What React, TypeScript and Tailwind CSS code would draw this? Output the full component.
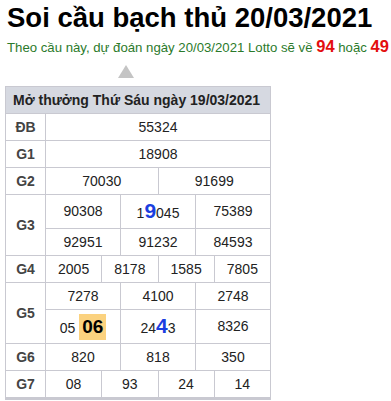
function Big({ children }: { children: React.ReactNode }) {
  return <span className="text-[21px] font-bold leading-none text-[#1b3fe0]">{children}</span>;
}

function Row({ label, span, cells, rowSpan, tall }: { label?: string; span: number; cells: React.ReactNode[]; rowSpan?: number; tall?: boolean }) {
  return (
    <tr className={tall ? "h-[34px]" : "h-[27px]"}>
      {label && (
        <td rowSpan={rowSpan} className="border border-[#c9c9d1] text-center text-[14px] font-bold text-[#444]">
          {label}
        </td>
      )}
      {cells.map((c, i) => (
        <td key={i} colSpan={span} className="border border-[#c9c9d1] text-center text-[14px] text-[#222]">
          {c}
        </td>
      ))}
    </tr>
  );
}

export default function App() {
  return (
    <div className="h-[401px] w-[391px] bg-white font-['Liberation_Sans',Arial,sans-serif]">
      <h1 className="pl-[7px] pt-[1px] text-[27.5px] font-bold leading-[34px] text-black">Soi cầu bạch thủ 20/03/2021</h1>
      <p className="mt-[2px] whitespace-nowrap pl-[7px] text-[13.2px] leading-[18px] text-[#2b7a2b]">
        Theo cầu này, dự đoán ngày 20/03/2021 Lotto sẽ về <b className="text-[16.5px] text-[#e30e0e]">94</b> hoặc{" "}
        <b className="text-[16.5px] text-[#e30e0e]">49</b>
      </p>
      <div className="ml-[118px] mt-[8px] h-0 w-0 border-x-[8px] border-b-[13px] border-x-transparent border-b-[#c4c4c4]" />
      <table className="ml-[5px] mt-[8px] w-[266px] table-fixed border-collapse shadow-[0_2px_0_#c9c9d1]">
        <colgroup>
          <col className="w-[40px]" />
          {Array.from({ length: 12 }).map((_, i) => (
            <col key={i} />
          ))}
        </colgroup>
        <tbody>
          <tr className="h-[27px] bg-[#d6d9e1]">
            <td colSpan={13} className="whitespace-nowrap border border-[#c9c9d1] pl-[7px] text-[14px] font-bold text-[#222]">
              Mở thưởng Thứ Sáu ngày 19/03/2021
            </td>
          </tr>
          <Row label="ĐB" span={12} cells={["55324"]} />
          <Row label="G1" span={12} cells={["18908"]} />
          <Row label="G2" span={6} cells={["70030", "91699"]} />
          <Row
            label="G3"
            rowSpan={2}
            span={4}
            tall
            cells={[
              "90308",
              <>
                1<Big>9</Big>045
              </>,
              "75389",
            ]}
          />
          <Row span={4} cells={["92951", "91232", "84593"]} />
          <Row label="G4" span={3} cells={["2005", "8178", "1585", "7805"]} />
          <Row label="G5" rowSpan={2} span={4} cells={["7278", "4100", "2748"]} />
          <Row
            span={4}
            tall
            cells={[
              <>
                05 <span className="inline-block bg-[#fbd27f] px-[3px] text-[19px] font-bold leading-[26px] text-black">06</span>
              </>,
              <>
                24<Big>4</Big>3
              </>,
              "8326",
            ]}
          />
          <Row label="G6" span={4} cells={["820", "818", "350"]} />
          <Row label="G7" span={3} cells={["08", "93", "24", "14"]} />
        </tbody>
      </table>
    </div>
  );
}
